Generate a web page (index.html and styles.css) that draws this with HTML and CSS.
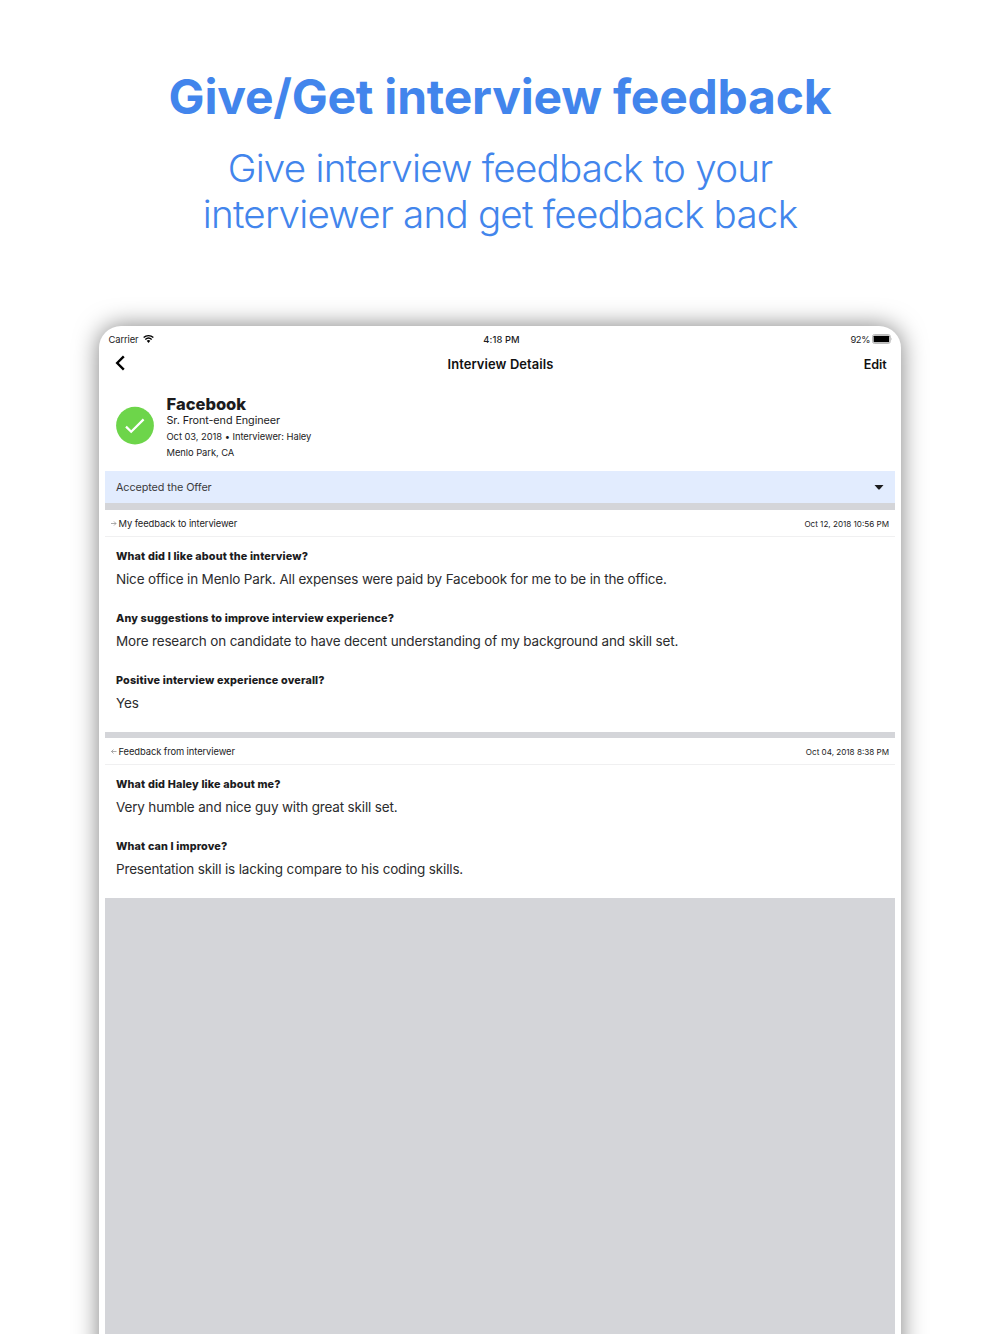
FILE: index.html
```
<!DOCTYPE html>
<html lang="en">
<head>
<meta charset="utf-8">
<title>Interview Details</title>
<link rel="stylesheet" href="styles.css">
</head>
<body>
<header class="promo">
  <h1 class="promo-title">Give/Get interview feedback</h1>
  <p class="promo-text">Give interview feedback to your<br>interviewer and get feedback back</p>
</header>
<main class="tablet">
  <div class="status">
    <div class="status-left"><span>Carrier</span>
      <svg class="wifi" viewBox="0 0 22 16"><path d="M11 16l3.6-4.3a5.6 5.6 0 0 0-7.2 0z"/><path d="M4.6 8.9a9.6 9.6 0 0 1 12.8 0M1.3 4.9a14.6 14.6 0 0 1 19.4 0" fill="none" stroke="#000" stroke-width="2.9"/></svg>
    </div>
    <div class="status-time">4:18 PM</div>
    <div class="status-right"><span>92%</span>
      <svg class="battery" viewBox="0 0 20 10"><rect x=".5" y=".5" width="17.8" height="9" rx="2" fill="#fff" stroke="#aaa" stroke-width=".8"/><rect x="1.6" y="1.7" width="15.6" height="6.6" rx=".6"/><path d="M19.1 3.6q1 1.4 0 2.8z" fill="#999"/></svg>
    </div>
  </div>
  <nav class="nav">
    <svg class="back" viewBox="0 0 10 16"><path d="M8.8 1.4L2.2 8l6.6 6.6" fill="none" stroke="#000" stroke-width="2.4"/></svg>
    <div class="nav-title">Interview Details</div>
    <div class="nav-edit">Edit</div>
  </nav>
  <section class="company">
    <svg class="check" viewBox="0 0 38 38"><circle cx="19" cy="18.6" r="18.9" fill="#6dd54a"/><path d="M10 19.6l5.2 5.2L27.6 12.4" fill="none" stroke="#fff" stroke-width="2.2"/></svg>
    <div class="company-info">
      <h2 class="company-name">Facebook</h2>
      <div class="role">Sr. Front-end Engineer</div>
      <div class="meta">Oct 03, 2018 • Interviewer: Haley</div>
      <div class="meta">Menlo Park, CA</div>
    </div>
  </section>
  <div class="outcome"><span>Accepted the Offer</span><svg class="caret" viewBox="0 0 10 5"><path d="M.5 0h9L5.8 4.2q-.8.8-1.6 0z" fill="#1c1c1e"/></svg></div>
  <section class="feedback given">
    <div class="feedback-head">
      <svg class="arrow" viewBox="0 0 6 5"><path d="M0 2.5h5M3 .5l2 2-2 2" fill="none" stroke="#888" stroke-width=".7"/></svg>
      <span class="head-label">My feedback to interviewer</span>
      <span class="head-date">Oct 12, 2018 10:56 PM</span>
    </div>
    <div class="qa"><h3 class="q">What did I like about the interview?</h3><p class="a">Nice office in Menlo Park. All expenses were paid by Facebook for me to be in the office.</p></div>
    <div class="qa"><h3 class="q">Any suggestions to improve interview experience?</h3><p class="a">More research on candidate to have decent understanding of my background and skill set.</p></div>
    <div class="qa"><h3 class="q">Positive interview experience overall?</h3><p class="a">Yes</p></div>
  </section>
  <section class="feedback received">
    <div class="feedback-head">
      <svg class="arrow" viewBox="0 0 6 5"><path d="M5.5 2.5h-5M2.5.5l-2 2 2 2" fill="none" stroke="#888" stroke-width=".7"/></svg>
      <span class="head-label">Feedback from interviewer</span>
      <span class="head-date">Oct 04, 2018 8:38 PM</span>
    </div>
    <div class="qa"><h3 class="q">What did Haley like about me?</h3><p class="a">Very humble and nice guy with great skill set.</p></div>
    <div class="qa"><h3 class="q">What can I improve?</h3><p class="a">Presentation skill is lacking compare to his coding skills.</p></div>
  </section>
  <div class="empty"></div>
</main>
</body>
</html>
```
FILE: styles.css
```
* { box-sizing: border-box; margin: 0; padding: 0; }
body {
  height: 1334px;
  overflow: hidden;
  display: flex;
  flex-direction: column;
  align-items: center;
  background: #fff;
  color: #1c1c1e;
  font-family: Inter, "Liberation Sans", sans-serif;
}
svg { display: block; flex: none; overflow: visible; }
.promo {
  width: 100%;
  height: 326px;
  flex: none;
  padding-top: 67px;
  text-align: center;
  color: #4285ec;
}
.promo-title { font-size: 48px; line-height: 60px; font-weight: 700; letter-spacing: -.22px; white-space: nowrap; }
.promo-text { margin-top: 18px; font-size: 38.6px; line-height: 46px; font-weight: 300; letter-spacing: -.78px; white-space: nowrap; }
.tablet {
  width: 802px;
  height: 1040px;
  flex: none;
  padding: 0 6px;
  display: flex;
  flex-direction: column;
  border-radius: 22px 22px 0 0;
  background: #fff;
  box-shadow: 0 0 24px rgba(0, 0, 0, .5);
}
.status {
  display: grid;
  grid-template-columns: 1fr auto 1fr;
  align-items: center;
  height: 26px;
  padding: 0 3px;
  font-size: 9.4px;
}
.status-left { display: flex; align-items: center; gap: 4px; padding-left: .5px; letter-spacing: -.1px; }
.status-time { padding-left: 3px; font-weight: 500; letter-spacing: .1px; }
.status-right { display: flex; align-items: center; justify-content: flex-end; gap: 2px; letter-spacing: -.4px; }
.wifi { width: 11px; height: 8px; }
.battery { width: 20px; height: 10px; }
.nav {
  display: grid;
  grid-template-columns: 1fr auto 1fr;
  align-items: center;
  height: 24px;
  padding: 0 8.5px 0 9.5px;
  color: #111;
  font-size: 12.9px;
  font-weight: 600;
}
.back { width: 10px; height: 16px; margin-top: -3px; }
.nav-title { letter-spacing: .12px; }
.nav-edit { text-align: right; font-size: 12.6px; letter-spacing: -.1px; }
.company { display: flex; align-items: center; gap: 12px; height: 95px; padding: 4px 11px 0; }
.check { width: 38px; height: 38px; }
.company-info { padding: 5px 0 0 .5px; }
.company-name { font-size: 16.5px; line-height: 18px; font-weight: 800; }
.role { font-size: 10.8px; line-height: 16px; letter-spacing: -.07px; }
.meta { font-size: 9.4px; line-height: 16px; letter-spacing: -.06px; }
.role + .meta { padding-top: .5px; }
.outcome {
  display: flex;
  align-items: center;
  justify-content: space-between;
  height: 32px;
  padding: 1px 11px 0;
  background: #e2ecfe;
  color: #3a3a3c;
  font-size: 10.8px;
  letter-spacing: -.09px;
}
.caret { width: 10px; height: 5px; }
.given { border-top: 7px solid #d4d5d9; padding-bottom: 8.1px; }
.received { border-top: 6px solid #d4d5d9; padding-bottom: 8.4px; }
.feedback-head {
  display: flex;
  align-items: center;
  height: 27px;
  padding: 0 6px;
  border-bottom: 1px solid #f0f0f1;
  font-size: 9.4px;
  letter-spacing: -.09px;
}
.received .feedback-head { padding-top: 1px; }
.arrow { width: 6px; height: 5px; margin-right: 1.5px; }
.head-date { margin-left: auto; padding-top: 1px; font-size: 8.1px; letter-spacing: 0; }
.qa { height: 62.3px; padding: 11.7px 11px 0; }
.q { font-size: 10.8px; line-height: 16px; font-weight: 800; letter-spacing: .15px; }
.a { margin-top: 3px; font-size: 13.5px; line-height: 23px; color: #2c2c2e; letter-spacing: -.165px; }
.empty { flex: 1; background: #d4d5d9; }
```
